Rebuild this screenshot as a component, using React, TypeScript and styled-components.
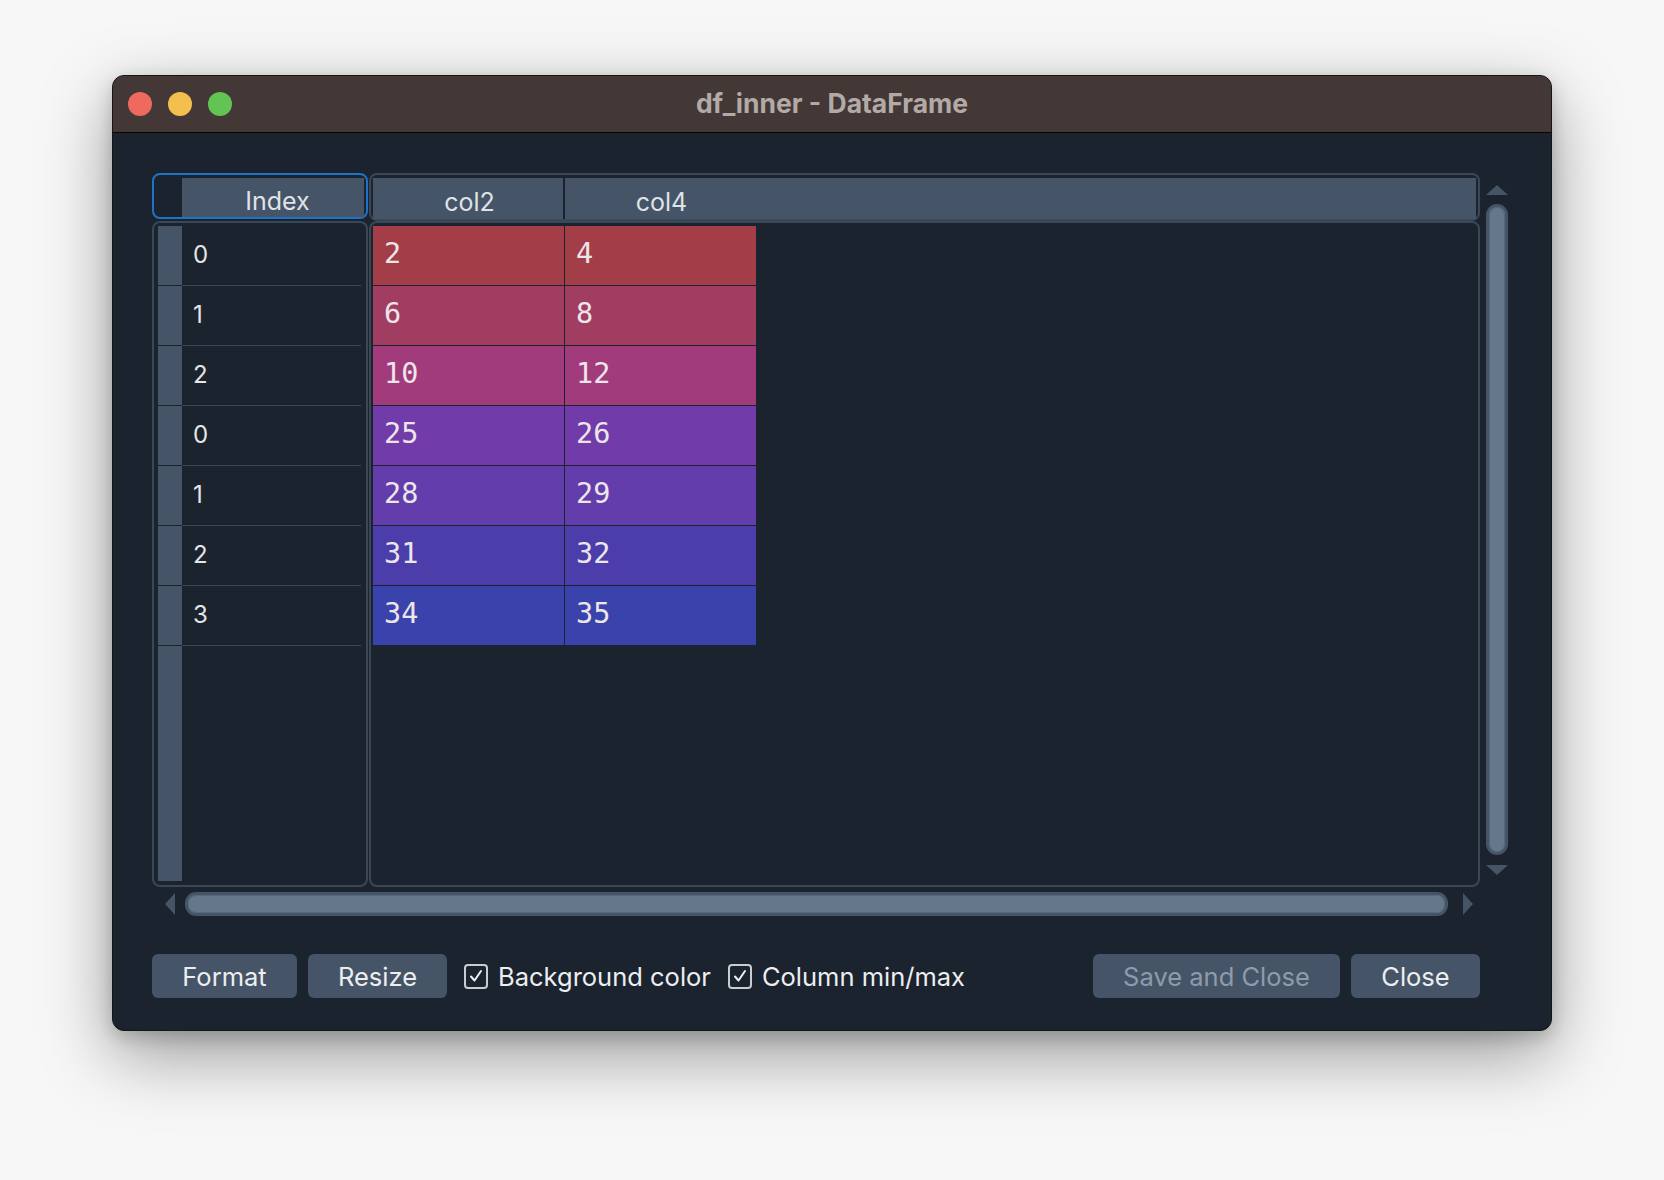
import React from "react";
import styled, { createGlobalStyle } from "styled-components";

const GlobalStyle = createGlobalStyle`
  html, body { margin: 0; padding: 0; background: #f7f7f7; }
  * { box-sizing: border-box; }
`;

const UI_FONT = `Inter, "Noto Sans", "Liberation Sans", sans-serif`;
const MONO_FONT = `"DejaVu Sans Mono", "Liberation Mono", monospace`;

const Page = styled.div`
  width: 1664px;
  height: 1180px;
  padding: 75px 0 0 112px;
  font-family: ${UI_FONT};
`;

const Window = styled.div`
  width: 1440px;
  height: 956px;
  border: 1px solid #161616;
  border-radius: 12px;
  overflow: hidden;
  display: flex;
  flex-direction: column;
  background: #1b232e;
  box-shadow: 0 24px 70px rgba(0, 0, 0, 0.38), 0 6px 18px rgba(0, 0, 0, 0.18);
`;

const TitleBar = styled.div`
  height: 57px;
  flex: none;
  background: #433836;
  border-bottom: 1px solid #050505;
  display: grid;
  grid-template-columns: 1fr auto 1fr;
  align-items: center;
  padding-left: 15px;
`;

const Lights = styled.div`
  display: flex;
  gap: 16px;
`;

const Light = styled.span<{ $c: string }>`
  width: 24px;
  height: 24px;
  border-radius: 50%;
  background: ${(p) => p.$c};
`;

const Title = styled.div`
  color: #b3aaa7;
  font-weight: 700;
  font-size: 26.5px;
  margin-left: -15px;
  padding-bottom: 2px;
`;

const Body = styled.div`
  flex: 1;
  padding: 40px 0 0 39px;
  display: flex;
  flex-direction: column;
`;

const TableGrid = styled.div`
  display: grid;
  grid-template-columns: 216px 1111px 22px;
  grid-template-rows: 48px 666px 29px;
  column-gap: 1px;
`;

const IndexHeader = styled.div`
  border: 2px solid #1f73c6;
  border-radius: 8px;
  height: 46px;
  padding: 3px 2px 0 28px;
  display: flex;
`;

const HeaderBox = styled.div`
  border: 2px solid #3a4757;
  border-radius: 8px;
  padding: 3px 2px 0 2px;
  display: flex;
`;

const HeaderFill = styled.div`
  flex: 1;
  display: flex;
  background: #465467;
`;

const HeaderCell = styled.div<{ $w?: number; $shift?: number }>`
  width: ${(p) => (p.$w ? `${p.$w}px` : "auto")};
  flex: ${(p) => (p.$w ? "none" : "1")};
  display: flex;
  align-items: center;
  justify-content: center;
  color: #dfe3e8;
  font-size: 25px;
  padding-top: 6px;
  padding-left: ${(p) => p.$shift ?? 0}px;
`;

const HeaderDivider = styled.div`
  width: 2px;
  background: #1b232e;
`;

const BodyBox = styled.div`
  border: 2px solid #3a4757;
  border-radius: 8px;
  padding: 3px 5px 4px 4px;
  display: flex;
  flex-direction: column;
`;

const DataBox = styled(BodyBox)`
  padding: 3px 2px 2px 2px;
`;

const IndexRow = styled.div`
  display: flex;
  height: 60px;
`;

const Strip = styled.div<{ $fill?: boolean }>`
  width: 24px;
  background: #465467;
  margin-bottom: ${(p) => (p.$fill ? "0" : "1px")};
`;

const IndexCell = styled.div`
  flex: 1;
  border-bottom: 1px solid #3a4757;
  display: flex;
  align-items: center;
  padding-left: 11px;
  padding-bottom: 2px;
  color: #e4e6e8;
  font-size: 24px;
`;

const FillerRow = styled.div`
  flex: 1;
  display: flex;
`;

const CellGrid = styled.div`
  display: grid;
  grid-template-columns: 191px 191px;
  grid-auto-rows: 59px;
  column-gap: 1px;
  row-gap: 1px;
`;

const Cell = styled.div`
  display: flex;
  align-items: center;
  padding-left: 11px;
  padding-bottom: 4px;
  font-family: ${MONO_FONT};
  font-size: 28.5px;
  color: #ece6ea;
`;

const VScroll = styled.div`
  grid-row: 1 / span 2;
  grid-column: 3;
  margin-left: 5px;
  width: 22px;
  display: flex;
  flex-direction: column;
  align-items: center;
  padding-top: 12px;
`;

const HScroll = styled.div`
  grid-row: 3;
  grid-column: 1 / span 2;
  display: flex;
  align-items: center;
  padding: 5px 0 0 13px;
`;

const Track = styled.div<{ $vertical?: boolean }>`
  background: #465467;
  border-radius: 11px;
  padding: 3px;
  display: flex;
  ${(p) =>
    p.$vertical
      ? `width: 22px; height: 651px; margin: 9px 0 10px 0;`
      : `height: 24px; width: 1263px; margin: 0 15px 0 10px;`}
`;

const Thumb = styled.div`
  flex: 1;
  background: #64788a;
  border-radius: 8px;
  box-shadow: inset 0 0 0 1px #56687b;
`;

const Arrow = styled.svg`
  display: block;
  flex: none;
`;

const BottomBar = styled.div`
  width: 1328px;
  margin-top: 38px;
  display: flex;
  justify-content: space-between;
  align-items: center;
`;

const Group = styled.div`
  display: flex;
  align-items: center;
`;

const Button = styled.button<{ $w: number; $muted?: boolean; $gap?: number }>`
  width: ${(p) => p.$w}px;
  height: 44px;
  margin-right: ${(p) => p.$gap ?? 0}px;
  border: none;
  border-radius: 6px;
  background: #465467;
  color: ${(p) => (p.$muted ? "#8f9bab" : "#eceef0")};
  font-family: ${UI_FONT};
  font-size: 25.5px;
  padding: 0;
`;

const CheckLabel = styled.label<{ $gap?: number }>`
  display: flex;
  align-items: center;
  gap: 10px;
  margin-right: ${(p) => p.$gap ?? 0}px;
  color: #eceef0;
  font-size: 25.5px;
`;

const Box = styled.span`
  width: 24px;
  height: 25px;
  border: 2px solid #c9ccd0;
  border-radius: 4px;
  display: flex;
  align-items: center;
  justify-content: center;
`;

const rows = [
  { idx: "0", a: "2", b: "4", c: "#a33d48" },
  { idx: "1", a: "6", b: "8", c: "#a23d62" },
  { idx: "2", a: "10", b: "12", c: "#a23b7c" },
  { idx: "0", a: "25", b: "26", c: "#713ba9" },
  { idx: "1", a: "28", b: "29", c: "#623dab" },
  { idx: "2", a: "31", b: "32", c: "#4b3daa" },
  { idx: "3", a: "34", b: "35", c: "#3a42ab" },
];

const Check = () => (
  <Box>
    <svg width="16" height="16" viewBox="0 0 16 16">
      <path d="M3 8.5 L6.5 12.5 L13 3" fill="none" stroke="#eef0f2" strokeWidth="2" strokeLinecap="round" strokeLinejoin="round" />
    </svg>
  </Box>
);

export default function App() {
  return (
    <Page>
      <GlobalStyle />
      <Window>
        <TitleBar>
          <Lights>
            <Light $c="#ee6a5e" />
            <Light $c="#f5bf4f" />
            <Light $c="#61c454" />
          </Lights>
          <Title>df_inner - DataFrame</Title>
          <div />
        </TitleBar>
        <Body>
          <TableGrid>
            <IndexHeader>
              <HeaderFill>
                <HeaderCell $shift={9}>Index</HeaderCell>
              </HeaderFill>
            </IndexHeader>
            <HeaderBox>
              <HeaderFill>
                <HeaderCell $w={190} $shift={3}>col2</HeaderCell>
                <HeaderDivider />
                <HeaderCell $w={190} $shift={3}>col4</HeaderCell>
                <HeaderCell />
              </HeaderFill>
            </HeaderBox>
            <VScroll>
              <Arrow width="22" height="10" viewBox="0 0 22 10">
                <path d="M0 10 L11 0 L22 10 Z" fill="#465467" />
              </Arrow>
              <Track $vertical>
                <Thumb />
              </Track>
              <Arrow width="22" height="10" viewBox="0 0 22 10">
                <path d="M0 0 L11 10 L22 0 Z" fill="#465467" />
              </Arrow>
            </VScroll>
            <BodyBox>
              {rows.map((r, i) => (
                <IndexRow key={i}>
                  <Strip />
                  <IndexCell>{r.idx}</IndexCell>
                </IndexRow>
              ))}
              <FillerRow>
                <Strip $fill />
              </FillerRow>
            </BodyBox>
            <DataBox>
              <CellGrid>
                {rows.map((r, i) => (
                  <React.Fragment key={i}>
                    <Cell style={{ background: r.c }}>{r.a}</Cell>
                    <Cell style={{ background: r.c }}>{r.b}</Cell>
                  </React.Fragment>
                ))}
              </CellGrid>
            </DataBox>
            <HScroll>
              <Arrow width="10" height="22" viewBox="0 0 10 22">
                <path d="M10 0 L0 11 L10 22 Z" fill="#465467" />
              </Arrow>
              <Track>
                <Thumb />
              </Track>
              <Arrow width="10" height="22" viewBox="0 0 10 22">
                <path d="M0 0 L10 11 L0 22 Z" fill="#465467" />
              </Arrow>
            </HScroll>
          </TableGrid>
          <BottomBar>
            <Group>
              <Button $w={145} $gap={11}>Format</Button>
              <Button $w={139} $gap={17}>Resize</Button>
              <CheckLabel $gap={17}>
                <Check />
                Background color
              </CheckLabel>
              <CheckLabel>
                <Check />
                Column min/max
              </CheckLabel>
            </Group>
            <Group>
              <Button $w={247} $gap={11} $muted>Save and Close</Button>
              <Button $w={129}>Close</Button>
            </Group>
          </BottomBar>
        </Body>
      </Window>
    </Page>
  );
}
